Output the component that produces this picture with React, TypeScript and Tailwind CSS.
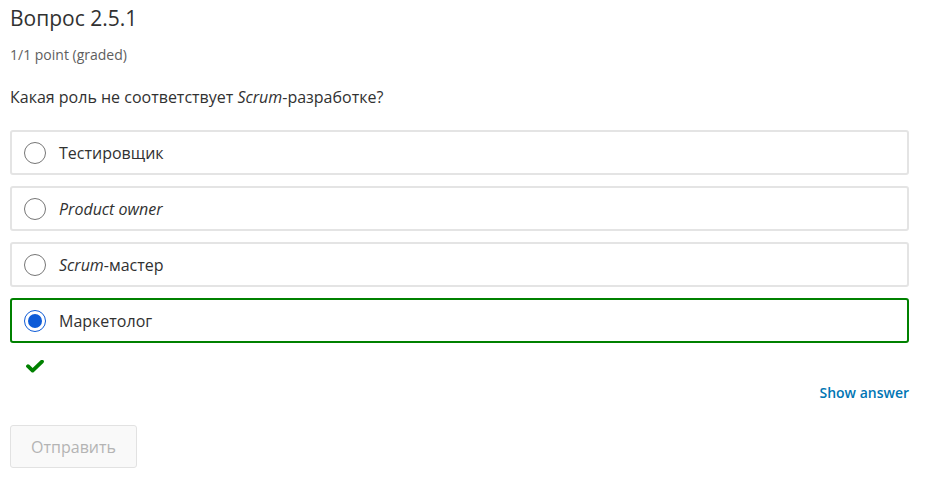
import React from 'react';

const options = [
  { id: 'a', label: <>Тестировщик</> },
  { id: 'b', label: <em>Product owner</em> },
  { id: 'c', label: <><em>Scrum</em>-мастер</> },
  { id: 'd', label: <>Маркетолог</>, selected: true },
];

export default function App() {
  return (
    <div
      className="w-[926px] h-[482px] bg-white pl-[10px] pr-[17px] pt-[4px] text-[#313131]"
      style={{ fontFamily: '"Open Sans", sans-serif' }}
    >
      {/* Header */}
      <h2 className="text-[21px] leading-[28px] font-normal">Вопрос 2.5.1</h2>
      <div className="mt-[13px] text-[14px] leading-[20px] text-[#5e5e5e]">1/1 point (graded)</div>

      <p className="mt-[20px] text-[16px] leading-[24px]">
        Какая роль не соответствует <em>Scrum</em>-разработке?
      </p>

      {/* Options */}
      <div className="mt-[21px] flex flex-col gap-[11px]">
        {options.map((o) => (
          <label
            key={o.id}
            className={
              o.selected
                ? 'flex items-center h-[45px] rounded-[3px] border-2 border-[#008100] px-[12px]'
                : 'flex items-center h-[45px] rounded-[3px] border-2 border-[#e4e4e4] px-[12px]'
            }
          >
            {o.selected ? (
              <span className="w-[22px] h-[22px] rounded-full border border-[#0d5bd7] flex items-center justify-center">
                <span className="w-[14px] h-[14px] rounded-full bg-[#0d5bd7]" />
              </span>
            ) : (
              <span className="w-[22px] h-[22px] rounded-full border border-[#767676] bg-white" />
            )}
            <span className="ml-[13px] text-[16px] leading-[24px]">{o.label}</span>
          </label>
        ))}
      </div>

      {/* Correct mark */}
      <div className="mt-[17px] ml-[16px] h-[13px]">
        <svg width="18" height="13" viewBox="0 0 18 13" className="block">
          <path d="M2 6.2 L6.6 10.6 L16 1.6" fill="none" stroke="#008100" strokeWidth="3.8" strokeLinecap="round" strokeLinejoin="round" />
        </svg>
      </div>

      <div className="mt-[10px] flex justify-end">
        <span className="text-[14px] leading-[20px] font-semibold text-[#0075b4]">Show answer</span>
      </div>

      <button
        disabled
        className="mt-[22px] w-[127px] h-[43px] rounded-[3px] border border-[#e2e2e2] bg-[#f9f9f9] text-[16px] text-[#b4b4b4]"
      >
        Отправить
      </button>
    </div>
  );
}
